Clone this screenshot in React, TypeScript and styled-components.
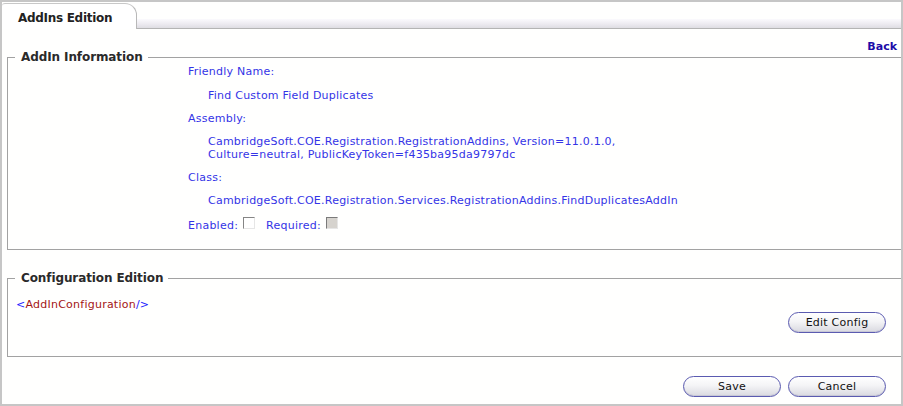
import React from "react";
import styled, { createGlobalStyle } from "styled-components";

const Global = createGlobalStyle`
  html, body { margin: 0; padding: 0; background: #ffffff; }
  body { font-family: "DejaVu Sans", Verdana, sans-serif; font-size: 11px; letter-spacing: 0.24px; }
`;

const Frame = styled.div`
  box-sizing: border-box;
  width: 903px;
  height: 406px;
  border: 2px solid #c6c6c6;
  background: #fffffe;
  overflow: hidden;
  display: flex;
  flex-direction: column;
`;

const TabBar = styled.div`
  display: flex;
  align-items: flex-end;
  height: 26px;
  margin-top: 1px;
`;

const Tab = styled.div`
  box-sizing: border-box;
  width: 135px;
  height: 26px;
  border-top: 1px solid #c8c8c8;
  border-right: 1px solid #b8b8b8;
  border-top-left-radius: 3px;
  border-top-right-radius: 12px;
  background: #ffffff;
  padding: 7px 0 0 16px;
  font-weight: bold;
  font-size: 12px;
  letter-spacing: -0.3px;
  color: #222;
`;

const TabStrip = styled.div`
  flex: 1;
  height: 10px;
  box-sizing: border-box;
  background: linear-gradient(#fbfafd, #ebe9ef 60%, #dedde2);
  border-bottom: 1px solid #b4b4b4;
`;

const Content = styled.div`
  display: flex;
  flex-direction: column;
  padding: 0 0 0 5px;
`;

const BackRow = styled.div`
  display: flex;
  justify-content: flex-end;
  padding: 11px 4px 0 0;
  height: 21px;
  box-sizing: border-box;
`;

const BackLink = styled.a`
  font-weight: bold;
  color: #1c0ca8;
  text-decoration: none;
  font-size: 11px;
  letter-spacing: 0;
`;

const Fieldset = styled.fieldset<{ $height: number }>`
  box-sizing: border-box;
  margin: 0;
  height: ${(p) => p.$height}px;
  border: 1px solid #a2a2a2;
  border-right: none;
  padding: 0;
`;

const Legend = styled.legend`
  margin-left: 7px;
  padding: 0 5px 0 6px;
  font-weight: bold;
  font-size: 12px;
  letter-spacing: -0.1px;
  color: #2a2a2a;
`;

const InfoBody = styled.div`
  display: flex;
  flex-direction: column;
  padding: 0 0 0 180px;
  color: #3434e6;
  line-height: 13px;
`;

const Label = styled.div<{ $gap: number }>`
  margin-top: ${(p) => p.$gap}px;
`;

const Value = styled.div<{ $gap: number }>`
  margin-top: ${(p) => p.$gap}px;
  padding-left: 20px;
`;

const CheckRow = styled.div`
  display: flex;
  align-items: center;
  margin-top: 12px;
`;

const CheckLabel = styled.span`
  margin-right: 5px;
`;

const Check = styled.span<{ $disabled?: boolean }>`
  display: inline-block;
  box-sizing: border-box;
  width: 12px;
  height: 12px;
  margin-top: -6px;
  margin-right: 11px;
  border-top: 1px solid ${(p) => (p.$disabled ? "#7a7a7a" : "#858585")};
  border-left: 1px solid ${(p) => (p.$disabled ? "#7a7a7a" : "#858585")};
  border-right: 1px solid #e6e6e6;
  border-bottom: 1px solid #e6e6e6;
  background: ${(p) => (p.$disabled ? "#d6d3ce" : "#ffffff")};
`;

const Spacer = styled.div<{ $h: number }>`
  height: ${(p) => p.$h}px;
  flex: none;
`;

const ConfigBody = styled.div`
  display: flex;
  flex-direction: column;
  padding: 13px 0 0 8px;
`;

const Xml = styled.div`
  font-size: 11px;
  margin-bottom: 1px;
`;

const XmlMark = styled.span`
  color: #2222ff;
`;

const XmlName = styled.span`
  color: #a31515;
`;

const ButtonRow = styled.div`
  display: flex;
  justify-content: flex-end;
  gap: 7px;
  padding-right: 15px;
`;

const PillButton = styled.button`
  box-sizing: border-box;
  width: 98px;
  height: 21px;
  border: 1px solid #5b5bb0;
  border-radius: 11px;
  background: linear-gradient(#ffffff, #f4f4f6 45%, #d9d9e0);
  font-family: "DejaVu Sans", Verdana, sans-serif;
  font-size: 11px;
  letter-spacing: 0.24px;
  color: #111;
  padding: 0;
  box-shadow: inset 0 -1px 0 #c8c8d6;
`;

export default function App() {
  return (
    <>
      <Global />
      <Frame>
        <TabBar>
          <Tab>AddIns Edition</Tab>
          <TabStrip />
        </TabBar>
        <Content>
          <BackRow>
            <BackLink href="#">Back</BackLink>
          </BackRow>
          <Fieldset $height={200}>
            <Legend>AddIn Information</Legend>
            <InfoBody>
              <Label $gap={1}>Friendly Name:</Label>
              <Value $gap={11}>Find Custom Field Duplicates</Value>
              <Label $gap={10}>Assembly:</Label>
              <Value $gap={10}>
                CambridgeSoft.COE.Registration.RegistrationAddins, Version=11.0.1.0,
                <br />
                Culture=neutral, PublicKeyToken=f435ba95da9797dc
              </Value>
              <Label $gap={10}>Class:</Label>
              <Value $gap={10}>CambridgeSoft.COE.Registration.Services.RegistrationAddins.FindDuplicatesAddIn</Value>
              <CheckRow>
                <CheckLabel>Enabled:</CheckLabel>
                <Check />
                <CheckLabel>Required:</CheckLabel>
                <Check $disabled />
              </CheckRow>
            </InfoBody>
          </Fieldset>
          <Spacer $h={21} />
          <Fieldset $height={86}>
            <Legend>Configuration Edition</Legend>
            <ConfigBody>
              <Xml>
                <XmlMark>&lt;</XmlMark>
                <XmlName>AddInConfiguration</XmlName>
                <XmlMark>/&gt;</XmlMark>
              </Xml>
              <ButtonRow>
                <PillButton>Edit Config</PillButton>
              </ButtonRow>
            </ConfigBody>
          </Fieldset>
          <Spacer $h={19} />
          <ButtonRow>
            <PillButton>Save</PillButton>
            <PillButton>Cancel</PillButton>
          </ButtonRow>
        </Content>
      </Frame>
    </>
  );
}
